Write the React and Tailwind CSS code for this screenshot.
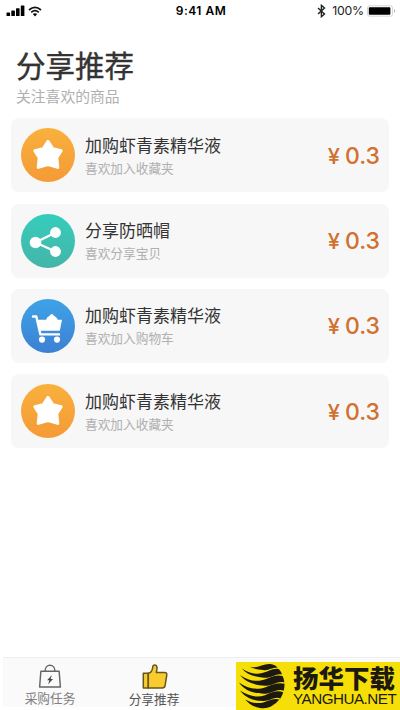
import clsx from 'clsx'

const items = [
  { id: 1, icon: 'star', title: '加购虾青素精华液', desc: '喜欢加入收藏夹', price: '0.3' },
  { id: 2, icon: 'share', title: '分享防晒帽', desc: '喜欢分享宝贝', price: '0.3' },
  { id: 3, icon: 'cart', title: '加购虾青素精华液', desc: '喜欢加入购物车', price: '0.3' },
  { id: 4, icon: 'star', title: '加购虾青素精华液', desc: '喜欢加入收藏夹', price: '0.3' },
]

const iconBg = {
  star: 'bg-linear-to-b from-[#f9b03c] to-[#f59a37]',
  share: 'bg-linear-to-b from-[#35cdbb] to-[#43b5a8]',
  cart: 'bg-linear-to-b from-[#3fa3e6] to-[#3c80d4]',
}

function StarIcon() {
  return (
    <svg viewBox="0 0 54 54" className="size-[54px]">
      <path
        d="M27 13.4 L31.8 20.8 L40.2 22.8 L35.8 29.6 L36.8 39.4 L27 36.6 L17.2 39.4 L18.2 29.6 L13.8 22.8 L22.2 20.8 Z"
        fill="#fff"
        stroke="#fff"
        strokeWidth="3"
        strokeLinejoin="round"
      />
    </svg>
  )
}

function ShareIcon() {
  return (
    <svg viewBox="0 0 54 54" className="size-[54px]">
      <path d="M34.5 18.5 L14.5 28.5 L34.5 37.5" fill="none" stroke="#fff" strokeWidth="2.3" />
      <circle cx="34.5" cy="18.5" r="5.4" fill="#fff" />
      <circle cx="14.5" cy="28.5" r="5.8" fill="#fff" />
      <circle cx="34.5" cy="37.5" r="5.4" fill="#fff" />
    </svg>
  )
}

function CartIcon() {
  return (
    <svg viewBox="0 0 54 54" className="size-[54px]">
      <path d="M12 17.5 H15.3 L19.4 35.4 H38" fill="none" stroke="#fff" strokeWidth="2.4" strokeLinecap="round" strokeLinejoin="round" />
      <path d="M15.5 20.7 H41 L38.8 31.8 H18 Z" fill="#fff" />
      <path d="M25 21 Q26 17.6 28.6 16.8 Q30.6 13.2 33 16.8 Q35.8 18 37 21 Z" fill="#fff" />
      <circle cx="21" cy="40.6" r="3.1" fill="#fff" />
      <circle cx="36" cy="40.6" r="3.1" fill="#fff" />
    </svg>
  )
}

function ItemIcon({ name }) {
  return (
    <div className={clsx('size-[54px] shrink-0 rounded-full', iconBg[name])}>
      {name === 'star' && <StarIcon />}
      {name === 'share' && <ShareIcon />}
      {name === 'cart' && <CartIcon />}
    </div>
  )
}

function StatusBar() {
  return (
    <header className="grid h-[22px] grid-cols-3 items-center pr-1 pl-1.5 font-[Inter,sans-serif] text-black">
      <div className="flex items-center gap-[3px]">
        <svg viewBox="0 0 19 12" className="h-3 w-[19px]">
          <rect x="0.5" y="7.5" width="3.6" height="3.5" rx="0.6" />
          <rect x="5.3" y="5.5" width="3.6" height="5.5" rx="0.6" />
          <rect x="10" y="3.2" width="3.6" height="7.8" rx="0.6" />
          <rect x="14.8" y="0.5" width="3.6" height="10.5" rx="0.6" />
        </svg>
        <svg viewBox="0 0 14 11" className="h-[11px] w-3.5">
          <path d="M1 4 Q7 -1.4 13 4 M3.2 6.4 Q7 3 10.8 6.4" fill="none" stroke="#111" strokeWidth="1.7" />
          <path d="M4.8 8.1 Q7 6.3 9.2 8.1 L7 10.4 Z" />
        </svg>
      </div>
      <div className="text-center text-[12px] font-semibold tracking-[0.5px] whitespace-nowrap">9:41 AM</div>
      <div className="flex items-center justify-end">
        <svg viewBox="0 0 9 14" className="mr-1.5 h-3.5 w-[9px]">
          <path d="M1 4 L7.5 10 L4.4 12.7 V1.3 L7.5 4 L1 10" fill="none" stroke="#222" strokeWidth="1.4" />
        </svg>
        <span className="pt-px text-[12.3px] tracking-[-0.2px] text-[#222]">100%</span>
        <svg viewBox="0 0 29 12" className="ml-[3px] h-3 w-[29px]">
          <rect x="0.5" y="0.8" width="25" height="10.4" rx="2" fill="#fff" stroke="#ccc" strokeWidth="0.8" />
          <rect x="1.8" y="2.2" width="21.6" height="7.6" rx="0.8" />
          <path d="M27 4 Q29 6 27 8 Z" fill="#aaa" />
        </svg>
      </div>
    </header>
  )
}

function ItemCard({ item }) {
  return (
    <li className="flex h-[74px] items-center rounded-lg bg-[#f7f7f7] pr-[9px] pl-2.5">
      <ItemIcon name={item.icon} />
      <div className="ml-2.5 flex-1">
        <p className="text-[17px] leading-6 text-[#333]">{item.title}</p>
        <p className="mt-px text-[12.7px] leading-5 text-[#b0b0b0]">{item.desc}</p>
      </div>
      <p className="flex items-baseline gap-[5px] pt-0.5 font-[Inter,sans-serif] leading-none font-medium text-[#d1712f]">
        <span className="text-[22px]">¥</span>
        <span className="text-[23px]">{item.price}</span>
      </p>
    </li>
  )
}

function BagIcon() {
  return (
    <svg viewBox="0 0 24 26" className="h-[26px] w-6" fill="none" stroke="#666" strokeWidth="1.5" strokeLinejoin="round">
      <path d="M2.5 7.5 H21.5 L22.8 24 H1.2 Z" />
      <path d="M6.8 7.5 C7 -0.9 17 -0.9 17.2 7.5" />
      <path d="M14 11.5 L9 17 H11.4 L10 21 L15.2 15.5 H12.6 Z" fill="#444" stroke="none" />
    </svg>
  )
}

function ThumbIcon() {
  return (
    <svg viewBox="0 0 26 26" className="h-[26px] w-[26px]" fill="#f9cb2c" stroke="#65551e" strokeWidth="1.5" strokeLinejoin="round">
      <path d="M1.3 9.3 H6.3 V24 H1.3 Z" />
      <path d="M6.3 9.3 C9.6 8.7 10.6 6 10.8 2.5 C11 0.4 14.7 0.6 15 3.3 C15.2 5.4 14.6 7 14.3 8.4 H22.6 Q25 8.4 24.8 10.9 L23.1 21.7 Q22.7 24 20.3 24 H6.3 Z" />
    </svg>
  )
}

function TabBar() {
  return (
    <nav className="ml-[3px] flex h-[50px] border-t border-[#eee] bg-[#fafafa] text-[12.7px] leading-[18px]">
      <div className="flex w-[94px] flex-col items-center pt-1.5 text-[#808080]">
        <BagIcon />
        <span>采购任务</span>
      </div>
      <div className="flex w-[114px] flex-col items-center pt-1.5 text-[#555]">
        <div className="pl-0.5">
          <ThumbIcon />
        </div>
        <span>分享推荐</span>
      </div>
    </nav>
  )
}

function GlobeLogo() {
  return (
    <svg viewBox="0 0 48 46" className="h-[46px] w-12" fill="#1c1a10">
      <path d="M10 3.4 C18 6.4 24 0.5 31 1 C35 1.6 37 2.6 38.5 4.6 C33 4.4 30 8 24 7 C18 6.4 14 5.4 10 3.4 Z" />
      <path d="M3 5.6 C12 12 21 11.6 28 8.6 C32 6.6 37 5.2 40 6.2 Q42 8.4 43 11.4 C37 10 33 15.2 25 14.8 C15 14 7 11 3 5.6 Z" />
      <path d="M1 12 C10 18.8 20 19 27 16 C33 13.2 39 11.4 43.6 13 Q45 16 45.4 19.4 C39 17.2 34 22.8 26 22.8 C15 22.4 6 18.6 1 12 Z" />
      <path d="M0 19.6 C8 25.8 18 27.2 26.5 24.2 C33 21.4 40 19 45.5 20.8 Q45.6 24.4 44.6 27.8 C39 25 33 30.6 26 30.8 C14 31 5 27 0 19.6 Z" />
      <path d="M1 27.6 C9 33 18 35 26 32.2 C33 29 39 27.2 44.2 29.2 Q43.4 32.4 41.4 35.4 C36 33 31 38 24.6 38 C14 38 6 34.6 1 27.6 Z" />
      <path d="M6 36.4 C13 40 19 41 25 39.2 C31 37 36 35 40.4 36.6 Q37 41 32 43.6 Q27 46 21 45 C14 43.6 10 40.6 6 36.4 Z" />
    </svg>
  )
}

function Banner() {
  return (
    <aside className="absolute right-0 bottom-0 flex h-12 w-[164px] items-center bg-[#f6df08] pl-[3px] text-[#1c1a10]">
      <GlobeLogo />
      <div className="ml-1.5 pb-0.5 whitespace-nowrap">
        <p className="text-[25.5px] leading-[26px] font-black">扬华下载</p>
        <p className="mt-px origin-left scale-x-[0.98] font-['Liberation_Sans',sans-serif] text-[15.5px] leading-4 tracking-[-0.5px]">YANGHUA.NET</p>
      </div>
    </aside>
  )
}

export default function App() {
  return (
    <div className="relative flex h-[710px] w-[400px] flex-col overflow-hidden bg-white pb-[3px] font-['Noto_Sans_CJK_SC',sans-serif]">
      <StatusBar />

      <main className="flex-1">
        <div className="h-[96.4px] pt-[22px] pl-4">
          <h1 className="text-[29.5px] leading-10 text-[#333] [-webkit-text-stroke:0.4px_#333]">分享推荐</h1>
          <p className="mt-px text-[14.8px] leading-[22px] text-[#b0b0b0]">关注喜欢的商品</p>
        </div>
        <ul className="mx-[11px] flex flex-col gap-[11.3px]">
          {items.map((item) => (
            <ItemCard key={item.id} item={item} />
          ))}
        </ul>
      </main>

      <TabBar />
      <Banner />
    </div>
  )
}
